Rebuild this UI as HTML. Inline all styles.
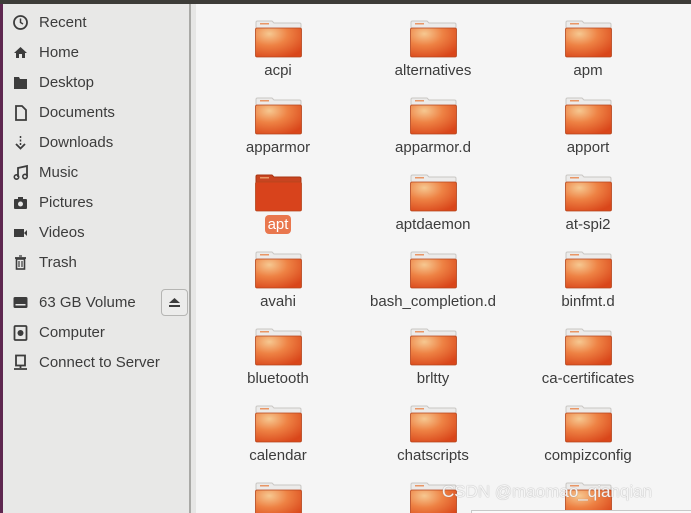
<!DOCTYPE html><html><head><style>
html,body{margin:0;width:691px;height:513px;overflow:hidden}
body{background:#f5f5f5;font-family:"Liberation Sans","DejaVu Sans",sans-serif;position:relative}
.top{position:absolute;left:0;top:0;width:691px;height:4px;background:#3d3c38}
.purp{position:absolute;left:0;top:4px;width:3px;height:509px;background:#5e2750}
.side{position:absolute;left:3px;top:4px;width:186px;height:509px;background:#e8e8e7;border-right:2px solid #a9a9a6}
.strip{position:absolute;left:191px;top:4px;width:5px;height:509px;background:#e6e6e5}
.it{position:absolute;left:39px;font-size:15px;color:#3c3c3c;line-height:18px}
.ic{position:absolute;left:12px;width:17px;height:17px}
.f{position:absolute;width:47px;height:38px}
.lb{position:absolute;width:150px;text-align:center;font-size:15px;color:#3c3c3c}
.ej{position:absolute;left:161px;top:289px;width:25px;height:25px;border:1px solid #b5b5b3;border-radius:4px;background:#ececeb}
</style></head><body>
<div class="top"></div><div class="purp"></div><div class="side"></div><div class="strip"></div>
<svg width="0" height="0" style="position:absolute"><defs>
<radialGradient id="g" cx="0.3" cy="0.2" r="0.9"><stop offset="0" stop-color="#f6c891"/><stop offset="0.45" stop-color="#ee8244"/><stop offset="1" stop-color="#d9461a"/></radialGradient>
</defs></svg>
<div id="sb"></div>
<div class="ej"><svg width="25" height="25"><path d="M7 13 L12.5 8 L18 13Z" fill="#3c3c3c"/><rect x="7" y="15" width="11" height="2" fill="#3c3c3c"/></svg></div>
<div id="grid"></div>
<div style="position:absolute;left:442px;top:482px;font-size:17px;color:rgba(255,255,255,.9);text-shadow:0 0 1px #888;font-family:'Liberation Sans',sans-serif">CSDN @maomao_qianqian</div>
<div style="position:absolute;left:471px;top:510px;width:220px;height:3px;border-top:1px solid #c8c8c8;border-left:1px solid #c8c8c8;background:#fafafa"></div>
<script>
var items=[["Recent",22],["Home",52],["Desktop",82],["Documents",112],["Downloads",142],["Music",172],["Pictures",202],["Videos",232],["Trash",262],["63 GB Volume",302],["Computer",332],["Connect to Server",362]];
var icons=[
'<circle cx="8.5" cy="8.5" r="6.5" fill="none" stroke="#3c3c3c" stroke-width="1.8"/><path d="M8.5 4.5V8.5L11 10" fill="none" stroke="#3c3c3c" stroke-width="1.5"/>',
'<path d="M2 9L8.5 3L15 9H13V14H4V9Z" fill="#3c3c3c"/><rect x="7" y="10" width="3" height="4" fill="#e8e8e7"/>',
'<path d="M2 3H7L8 5H15V15H2Z" fill="#3c3c3c"/>',
'<path d="M4 2H10L14 6V16H4Z" fill="none" stroke="#3c3c3c" stroke-width="1.8"/>',
'<path d="M8.5 2V11" stroke="#3c3c3c" stroke-width="1.5" stroke-dasharray="2 1.5"/><path d="M4 10L8.5 14.5L13 10" fill="none" stroke="#3c3c3c" stroke-width="1.8"/>',
'<path d="M6 13V4L15 2V12" fill="none" stroke="#3c3c3c" stroke-width="1.8"/><circle cx="4.5" cy="13" r="2.2" fill="none" stroke="#3c3c3c" stroke-width="1.6"/><circle cx="13" cy="12.5" r="2.2" fill="none" stroke="#3c3c3c" stroke-width="1.6"/>',
'<rect x="2" y="5" width="13" height="10" rx="1" fill="#3c3c3c"/><rect x="6" y="3" width="5" height="3" fill="#3c3c3c"/><circle cx="8.5" cy="10" r="2.5" fill="#e8e8e7"/>',
'<rect x="2" y="5" width="10" height="8" fill="#3c3c3c"/><path d="M12 9L15 6V12Z" fill="#3c3c3c"/>',
'<path d="M3 4H14" stroke="#3c3c3c" stroke-width="1.8"/><rect x="4.5" y="5" width="8" height="10" fill="none" stroke="#3c3c3c" stroke-width="1.6"/><path d="M7 2H10M7 7V13M10 7V13" stroke="#3c3c3c" stroke-width="1.2"/>',
'<rect x="1.5" y="3" width="14" height="11" rx="1.5" fill="#3c3c3c"/><rect x="3.5" y="10" width="10" height="1.5" fill="#e8e8e7"/>',
'<rect x="2.5" y="2" width="12" height="14" rx="1" fill="none" stroke="#3c3c3c" stroke-width="1.8"/><circle cx="8.5" cy="9" r="3" fill="#3c3c3c"/>',
'<rect x="4" y="1.5" width="9" height="10" fill="none" stroke="#3c3c3c" stroke-width="1.8"/><path d="M8.5 11.5V14M2 15H15" stroke="#3c3c3c" stroke-width="1.8"/>'];
var h='';items.forEach(function(t,i){h+='<svg class="ic" style="top:'+(t[1]-8)+'px" viewBox="0 0 17 17">'+icons[i]+'</svg><div class="it" style="top:'+(t[1]-8)+'px">'+t[0]+'</div>';});
document.getElementById('sb').innerHTML=h;
var names=["acpi","alternatives","apm","apparmor","apparmor.d","apport","apt","aptdaemon","at-spi2","avahi","bash_completion.d","binfmt.d","bluetooth","brltty","ca-certificates","calendar","chatscripts","compizconfig","","",""];
var cx=[278,433,588],g='';
names.forEach(function(n,i){var c=cx[i%3],r=Math.floor(i/3),y=20+r*77;var sel=n=="apt";
var body=sel?'#d8431c':'url(#g)';
g+='<svg class="f" style="left:'+(c-23)+'px;top:'+y+'px" viewBox="0 0 47 38"><path d="M1 9V2.5Q1 1 2.5 1H17L19 3H44.5Q46 3 46 4.5V9Z" fill="'+(sel?'#c84420':'#ecebea')+'" stroke="'+(sel?'#a83512':'#c9c7c4')+'" stroke-width="1"/><rect x="5" y="3" width="9" height="1.5" fill="#e99665"/><rect x="0.5" y="8" width="46" height="29" rx="1.5" fill="'+body+'" stroke="#b5451c" stroke-width="0.8"/></svg>';
if(n){g+='<div class="lb" style="left:'+(c-75)+'px;top:'+(y+42)+'px">'+(sel?'<span style="background:#e9774e;color:#fff;border-radius:4px;padding:1px 3px">apt</span>':n)+'</div>';}});
document.getElementById('grid').innerHTML=g;
</script>
</body></html>
